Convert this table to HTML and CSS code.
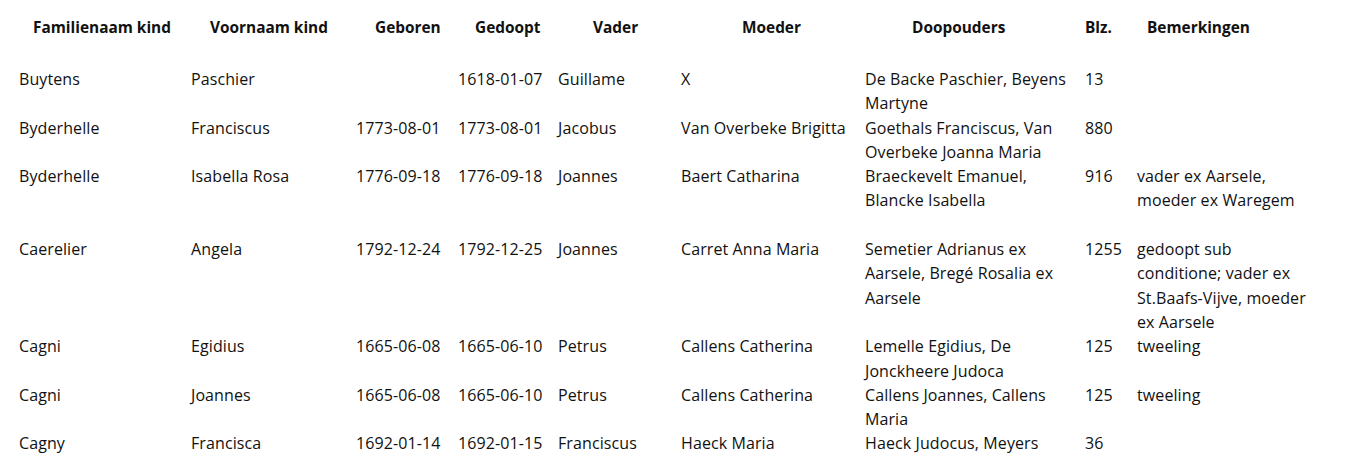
FILE: index.html
```html
<!DOCTYPE html>
<html lang="nl">
<head>
<meta charset="utf-8">
<title>Doopregister</title>
<link rel="stylesheet" href="styles.css">
</head>
<body>
<table class="register">
  <colgroup>
    <col class="c-fam"><col class="c-voor"><col class="c-geb"><col class="c-ged"><col class="c-vad"><col class="c-moe"><col class="c-doop"><col class="c-blz"><col class="c-bem">
  </colgroup>
  <thead>
    <tr>
      <th class="h-fam">Familienaam kind</th>
      <th class="h-voor">Voornaam kind</th>
      <th class="h-geb">Geboren</th>
      <th class="h-ged">Gedoopt</th>
      <th class="h-vad">Vader</th>
      <th class="h-moe">Moeder</th>
      <th class="h-doop">Doopouders</th>
      <th class="h-blz">Blz.</th>
      <th class="h-bem">Bemerkingen</th>
    </tr>
  </thead>
  <tbody>
    <tr>
      <td>Buytens</td><td>Paschier</td><td></td><td>1618-01-07</td><td>Guillame</td><td>X</td><td>De Backe Paschier, Beyens<br>Martyne</td><td>13</td><td></td>
    </tr>
    <tr>
      <td>Byderhelle</td><td>Franciscus</td><td>1773-08-01</td><td>1773-08-01</td><td>Jacobus</td><td>Van Overbeke Brigitta</td><td>Goethals Franciscus, Van<br>Overbeke Joanna Maria</td><td>880</td><td></td>
    </tr>
    <tr class="tall">
      <td>Byderhelle</td><td>Isabella Rosa</td><td>1776-09-18</td><td>1776-09-18</td><td>Joannes</td><td>Baert Catharina</td><td>Braeckevelt Emanuel,<br>Blancke Isabella</td><td>916</td><td>vader ex Aarsele,<br>moeder ex Waregem</td>
    </tr>
    <tr>
      <td>Caerelier</td><td>Angela</td><td>1792-12-24</td><td>1792-12-25</td><td>Joannes</td><td>Carret Anna Maria</td><td>Semetier Adrianus ex<br>Aarsele, Bregé Rosalia ex<br>Aarsele</td><td>1255</td><td>gedoopt sub<br>conditione; vader ex<br>St.Baafs-Vijve, moeder<br>ex Aarsele</td>
    </tr>
    <tr>
      <td>Cagni</td><td>Egidius</td><td>1665-06-08</td><td>1665-06-10</td><td>Petrus</td><td>Callens Catherina</td><td>Lemelle Egidius, De<br>Jonckheere Judoca</td><td>125</td><td>tweeling</td>
    </tr>
    <tr>
      <td>Cagni</td><td>Joannes</td><td>1665-06-08</td><td>1665-06-10</td><td>Petrus</td><td>Callens Catherina</td><td>Callens Joannes, Callens<br>Maria</td><td>125</td><td>tweeling</td>
    </tr>
    <tr>
      <td>Cagny</td><td>Francisca</td><td>1692-01-14</td><td>1692-01-15</td><td>Franciscus</td><td>Haeck Maria</td><td>Haeck Judocus, Meyers</td><td>36</td><td></td>
    </tr>
  </tbody>
</table>
</body>
</html>
```
FILE: styles.css
```css
html, body {
  margin: 0;
  padding: 0;
  background: #ffffff;
}
body {
  font-family: "Open Sans", "Liberation Sans", sans-serif;
  font-size: 16px;
  letter-spacing: 0.1px;
  color: #111111;
  overflow: hidden;
}
.register {
  border-collapse: collapse;
  table-layout: fixed;
  width: 1321px;
  margin-left: 19px;
}
.c-fam { width: 172px; }
.c-voor { width: 165px; }
.c-geb { width: 102px; }
.c-ged { width: 100px; }
.c-vad { width: 123px; }
.c-moe { width: 184px; }
.c-doop { width: 220px; }
.c-blz { width: 52px; }
.c-bem { width: 203px; }

.register th,
.register td {
  padding: 0;
  text-align: left;
  vertical-align: top;
  line-height: 24.3px;
  white-space: nowrap;
}
.register th {
  font-size: 15.4px;
  letter-spacing: 0;
  font-weight: 700;
  padding-top: 16px;
  padding-bottom: 26.7px;
}
.register tr.tall td {
  padding-bottom: 24.3px;
}
.h-fam { padding-left: 14px !important; }
.h-voor { padding-left: 19px !important; }
.h-geb { padding-left: 19px !important; }
.h-ged { padding-left: 17px !important; }
.h-vad { padding-left: 35px !important; }
.h-moe { padding-left: 61px !important; }
.h-doop { padding-left: 47px !important; }
.h-blz { padding-left: 0 !important; }
.h-bem { padding-left: 10px !important; }
```
